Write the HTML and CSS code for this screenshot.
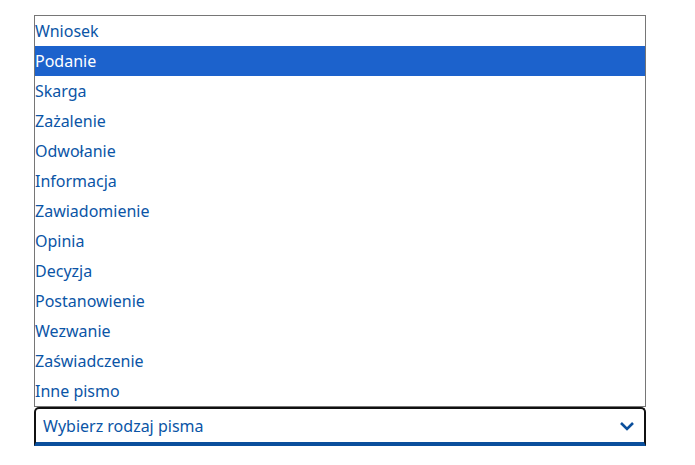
FILE: index.html
```html
<!DOCTYPE html>
<html lang="pl">
<head>
<meta charset="utf-8">
<link rel="stylesheet" href="styles.css">
</head>
<body>
<div class="combo">
  <ul class="listbox">
    <li class="option">Wniosek</li>
    <li class="option selected">Podanie</li>
    <li class="option">Skarga</li>
    <li class="option">Zażalenie</li>
    <li class="option">Odwołanie</li>
    <li class="option">Informacja</li>
    <li class="option">Zawiadomienie</li>
    <li class="option">Opinia</li>
    <li class="option">Decyzja</li>
    <li class="option">Postanowienie</li>
    <li class="option">Wezwanie</li>
    <li class="option">Zaświadczenie</li>
    <li class="option">Inne pismo</li>
  </ul>
  <div class="select">
    <span class="select-text">Wybierz rodzaj pisma</span>
    <svg class="chevron" width="16" height="10" viewBox="0 0 16 10"><path d="M2 2 L8 8 L14 2" fill="none" stroke="#0b4f9c" stroke-width="2.6"/></svg>
  </div>
</div>
</body>
</html>
```
FILE: styles.css
```css
html, body { margin: 0; padding: 0; background: #fff; }
body { font-family: "Noto Sans", "Open Sans", sans-serif; }
.combo { width: 612px; margin: 15px 0 0 34px; }
.listbox {
  list-style: none; margin: 0; padding: 0;
  border: 1px solid #767676;
}
.option {
  height: 30px; line-height: 30px; font-size: 16px;
  color: #0b55a6; padding-left: 0;
}
.option.selected { background: #1c62cc; color: #fff; }
.select {
  height: 33px; margin-top: 0;
  border: 2px solid #111; border-bottom: 4px solid #0a4f9c;
  border-radius: 5px 5px 0 0;
  display: flex; align-items: center; justify-content: space-between;
  padding: 0 9px 0 7px;
}
.select-text { font-size: 16px; color: #0b55a6; }
.chevron { display: block; }
```
